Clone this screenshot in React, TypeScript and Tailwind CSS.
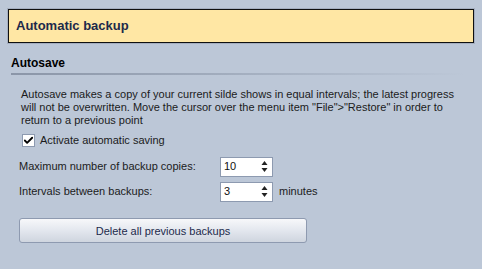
import { Check } from "lucide-react";

function Spin({ value }: { value: string }) {
  return (
    <div className="w-[53px] h-[20px] bg-white border border-[#8d9ab0] flex items-center justify-between pl-[3px] pr-[4px]">
      <span className="text-[11px] text-[#111]">{value}</span>
      <svg width="7" height="13" viewBox="0 0 7 13">
        <path d="M3.5 1 L6.5 5 L0.5 5 Z" fill="#222" />
        <path d="M0.5 8 L6.5 8 L3.5 12 Z" fill="#222" />
      </svg>
    </div>
  );
}

export default function App() {
  return (
    <div className="w-[482px] h-[269px] bg-[#bcc7d7] overflow-hidden font-['Liberation_Sans',Arial,sans-serif] text-[#1b1b1b]">
      <div className="pt-[9px] px-[8px]">
        <div className="h-[34px] border border-[#101010] bg-[#ffe7a4] flex items-center pl-[7px] shadow-[0_0_0_1px_rgba(120,130,150,0.35)]">
          <span className="text-[13px] font-bold text-[#1d2a4b]">Automatic backup</span>
        </div>
      </div>

      <div className="pl-[11px] pr-[17px] mt-[13px]">
        <div className="text-[12px] font-bold text-black leading-[14px]">Autosave</div>
        <div className="h-[2px] mt-[3px] bg-gradient-to-r from-[#8b96a8] via-[#a3aebf] to-[#bcc7d7]" />
      </div>

      <div className="pl-[21px] pr-[20px] mt-[13px] text-[11px] leading-[13px]">
        Autosave makes a copy of your current silde shows in equal intervals; the latest progress will not be overwritten. Move the cursor over the menu item "File"&gt;"Restore" in order to return to a previous point
      </div>

      <div className="pl-[22px] mt-[5px] flex items-center gap-[5px] text-[11px]">
        <div className="w-[13px] h-[13px] bg-white border border-[#8d9ab0] flex items-center justify-center">
          <Check size={13} strokeWidth={4} className="text-black" />
        </div>
        <span>Activate automatic saving</span>
      </div>

      <div className="pl-[19px] mt-[8px] flex flex-col gap-[5px] text-[11px]">
        <div className="flex items-center">
          <span className="w-[201px]">Maximum number of backup copies:</span>
          <Spin value="10" />
        </div>
        <div className="flex items-center">
          <span className="w-[201px]">Intervals between backups:</span>
          <Spin value="3" />
          <span className="ml-[6px]">minutes</span>
        </div>
      </div>

      <div className="pl-[19px] mt-[16px]">
        <button className="w-[288px] h-[25px] rounded-[3px] border border-[#8e9ab0] bg-gradient-to-b from-[#f7f8fa] via-[#e3e7ee] to-[#cfd5df] text-[11px] text-[#1d2a4b] font-['Liberation_Sans',Arial,sans-serif]">
          Delete all previous backups
        </button>
      </div>
    </div>
  );
}
